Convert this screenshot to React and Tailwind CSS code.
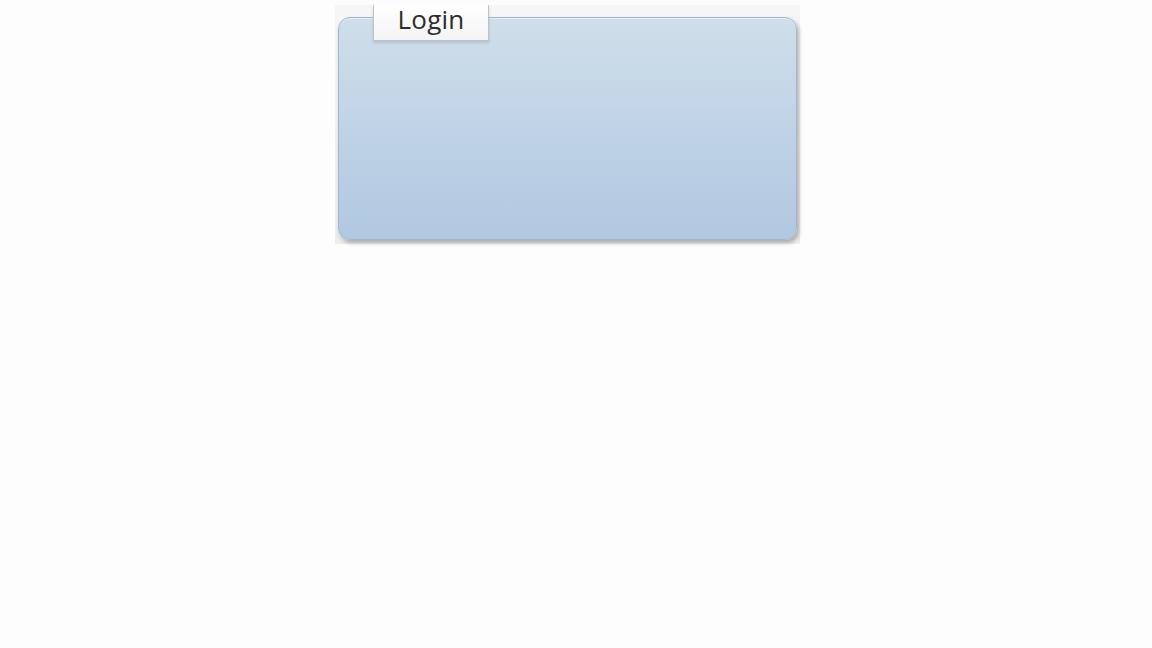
import React from 'react';

const App = () => {
  return (
    <div className="min-h-screen bg-[#fdfdfd] flex" style={{ fontFamily: '"Open Sans", "Noto Sans", sans-serif' }}>
      <div className="mt-[5px] ml-[335px] w-[465px] h-[239px] bg-gradient-to-b from-[#f6f6f6] to-[#ededed] relative pt-[12px] pl-[3px] pr-[3px] pb-[4px]">
        {/* panel */}
        <div className="h-full rounded-[12px] border border-[#9fb8d0] bg-gradient-to-b from-[#cfdeea] to-[#b1c8e1] shadow-[2px_3px_4px_rgba(0,0,0,0.28),inset_0_1px_0_rgba(255,255,255,0.5)]" />
        {/* tab */}
        <div className="absolute left-[38px] top-0 w-[116px] h-[36px] bg-gradient-to-b from-white to-[#f4f4f4] border-b border-x border-[#b7c4d0] shadow-[0_2px_3px_rgba(0,0,0,0.12)] flex items-start justify-center">
          <span className="text-[26px] leading-[28px] text-[#2d2d2d] tracking-[0.2px]">Login</span>
        </div>
      </div>
    </div>
  );
};

export default App;
